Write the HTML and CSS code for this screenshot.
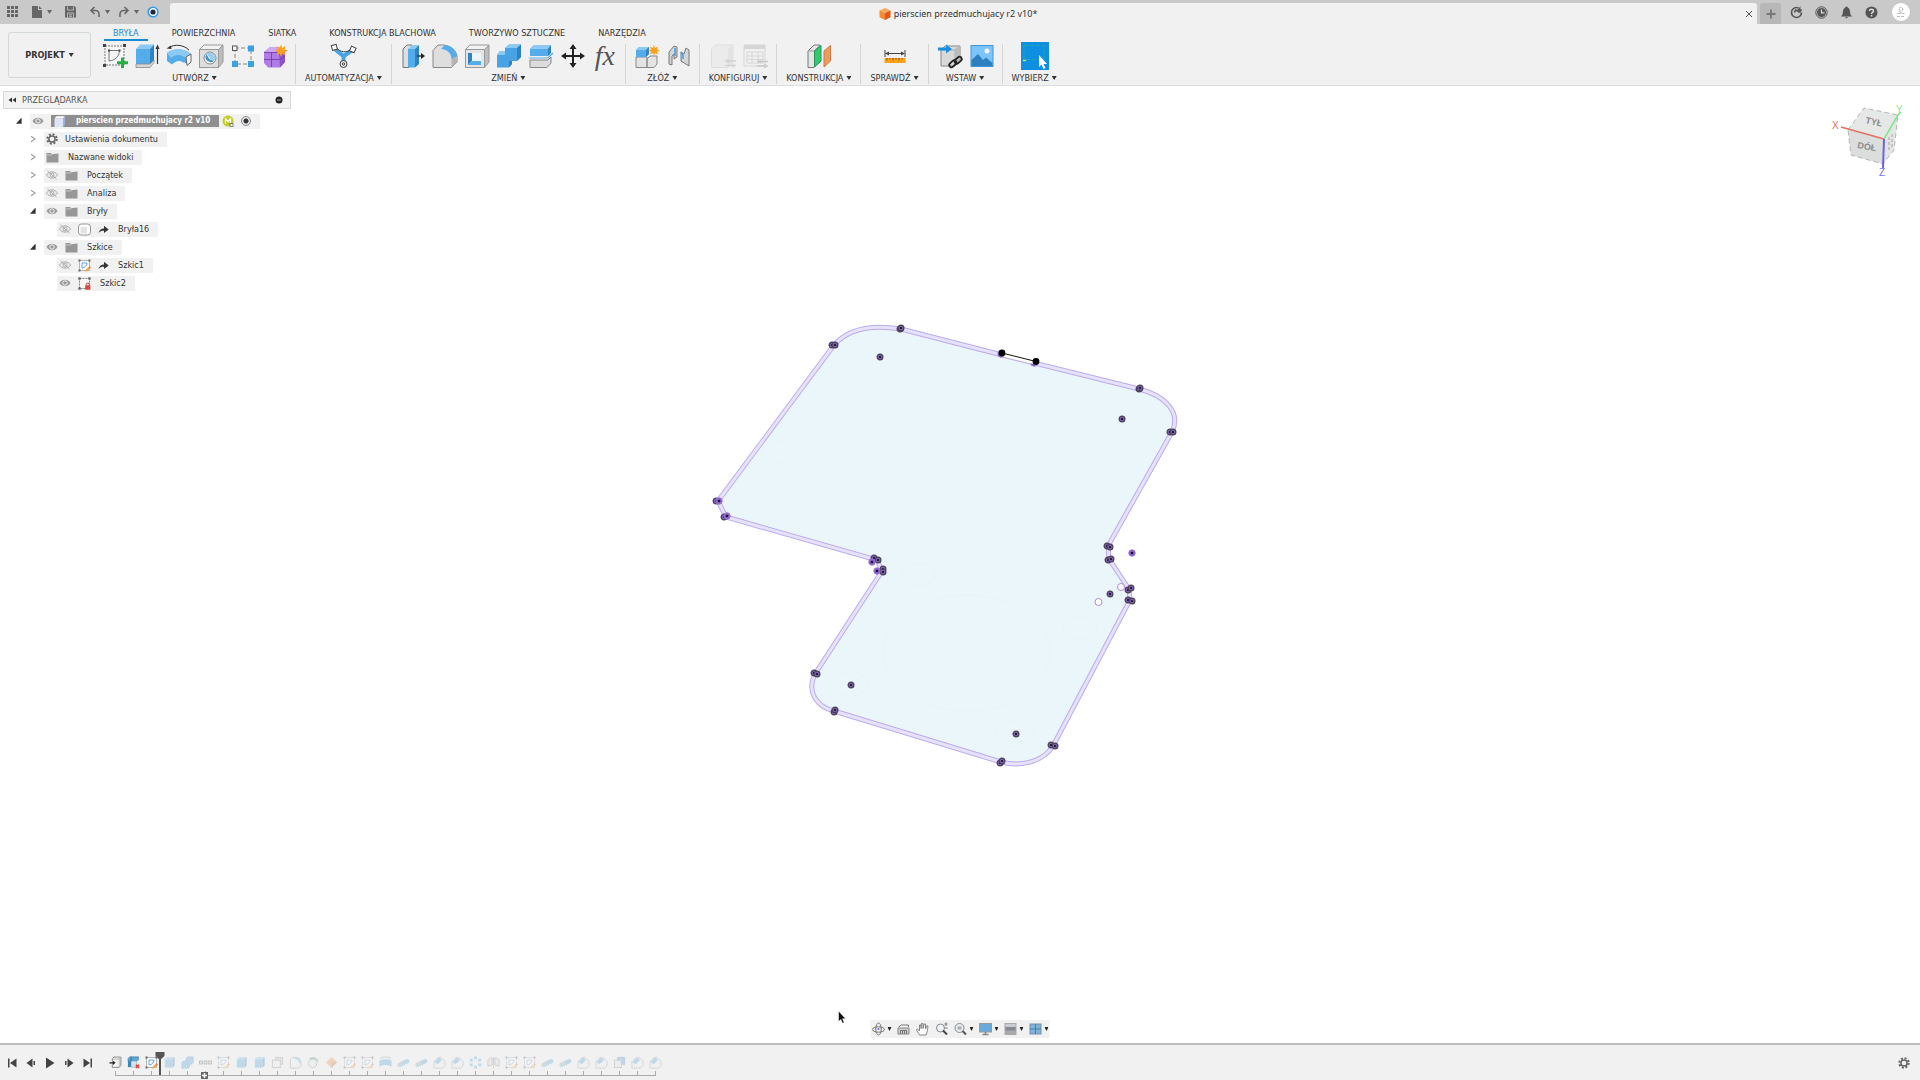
FILE: index.html
```html
<!DOCTYPE html>
<html lang="pl">
  <head>
    <meta charset="UTF-8" />
    <meta name="viewport" content="width=device-width, initial-scale=1.0" />
    <title>pierscien przedmuchujacy r2 v10*</title>
    <link rel="stylesheet" href="styles.css">
  </head>
  <body>
    <!-- Shared icon shapes -->
    <svg class="sprite" aria-hidden="true">
      <symbol id="eye" viewBox="0 0 12 10">
        <path d="M0.5 5C3 0.6 9 0.6 11.5 5C9 9.4 3 9.4 0.5 5Z" fill="#999" />
        <circle cx="6" cy="5" r="2.2" fill="none" stroke="#f4f4f4" />
      </symbol>
      <symbol id="eye-off" viewBox="0 0 12 10">
        <path d="M0.5 5C3 0.8 9 0.8 11.5 5C9 9.2 3 9.2 0.5 5Z" fill="none" stroke="#aaa" />
        <circle cx="6" cy="5" r="2" fill="none" stroke="#aaa" />
        <path d="M1.5 1L10.5 9" stroke="#aaa" />
      </symbol>
      <symbol id="folder" viewBox="0 0 13 11">
        <path d="M0.5 1H5L6 2.2L12.5 1.6V10.5H0.5Z" fill="#979797" />
        <path d="M1 3H5.4L6.6 2" fill="none" stroke="#d5d5d5" stroke-width="0.8" />
      </symbol>
      <symbol id="gear" viewBox="0 0 12 12">
        <circle cx="6" cy="6" r="4.7" fill="none" stroke="#666" stroke-width="2" stroke-dasharray="2 1.69" />
        <circle cx="6" cy="6" r="3.1" fill="none" stroke="#666" stroke-width="1.5" />
      </symbol>
      <symbol id="link-arrow" viewBox="0 0 11 9">
        <path d="M0.5 8C1.5 4.5 3.5 3.4 6 3.4V0.8L10.7 4.6L6 8V5.8C3.7 5.7 2 6.3 0.5 8Z" fill="#333" />
      </symbol>
      <symbol id="sketch" viewBox="0 0 13 13">
        <path d="M1.5 1.5H11.5V11.5H1.5Z" fill="#f8f9fa" stroke="#999" stroke-width="0.7" />
        <path d="M4 4H9C9 6.500 7 8.700 4 9Z" fill="none" stroke="#5b9fdc" stroke-width="0.9" />
        <g fill="#666"><rect x="0.500" y="0.500" width="2" height="2" /><rect x="10.500" y="0.500" width="2" height="2" /><rect x="0.500" y="10.500" width="2" height="2" /></g>
        <path d="M7 12.600L7.500 10.900L10.600 8L12 9.400L8.900 12.200Z" fill="#f3a53b" />
        <path d="M10.600 8L11.600 7.100L13 8.500L12 9.400Z" fill="#e46f43" />
      </symbol>
      <symbol id="sketch-locked" viewBox="0 0 13 13">
        <path d="M1.500 1.500H11.500V11.500H1.500Z" fill="#f8f8f8" stroke="#666" stroke-width="0.8" stroke-dasharray="2 1" />
        <g fill="#666"><rect x="0.300" y="0.300" width="2.400" height="2.400" /><rect x="10.300" y="0.300" width="2.400" height="2.400" /><rect x="0.300" y="10.300" width="2.400" height="2.400" /></g>
        <path d="M8.200 8.500V7.600A1.600 1.600 0 0 1 11.400 7.600V8.500" fill="none" stroke="#c73c3c" />
        <rect x="7.200" y="8.200" width="5.200" height="4.600" rx="0.600" fill="#d94444" />
      </symbol>
      <symbol id="body" viewBox="0 0 13 13">
        <rect x="0.500" y="1" width="12" height="11" rx="3" fill="#fff" stroke="#999" />
        <rect x="2.500" y="4" width="6.500" height="6.500" fill="#e3e3e3" />
      </symbol>
      <symbol id="component" viewBox="0 0 13 13">
        <path d="M1.500 3.500L3.500 1.300H12L10 3.500Z" fill="#fff" />
        <path d="M1.500 3.500H10V12H1.500Z" fill="#dfe4f6" />
        <path d="M10 3.500L12 1.300V9.800L10 12Z" fill="#9fb1dc" />
      </symbol>

      <!-- Timeline features -->
      <symbol id="f-import" viewBox="0 0 14 14">
        <path d="M3.5 5.5V3L5.5 1.2H12.8V10L11 12.3H3.5V9.3" fill="#f3f3f3" stroke="#777" stroke-width="0.9" />
        <path d="M11 12V3.3H3.8M11 3.3L12.6 1.4" fill="none" stroke="#aaa" stroke-width="0.8" />
        <path d="M0.500 7.400H4.500" stroke="#222" stroke-width="1.400" />
        <path d="M4 4.800L7 7.400L4 10Z" fill="#222" />
      </symbol>
      <symbol id="f-remove" viewBox="0 0 14 14">
        <path d="M1 3L3 0.800H12.500V4L10.500 5.500H1Z" fill="#5aa7dc" stroke="#5d7f9c" stroke-width="0.600" />
        <path d="M1 5.200H4.500V12H1Z" fill="#3c86bd" />
        <path d="M4.500 5.500H10.500V12H4.500Z" fill="#d3e5f3" stroke="#8aa" stroke-width="0.600" />
        <path d="M4.500 1V5.200" stroke="#2f5f85" stroke-width="0.800" />
        <path d="M9.500 9.500L13 13M13 9.500L9.500 13" stroke="#e33b2e" stroke-width="1.500" />
      </symbol>
      <symbol id="f-extrude" viewBox="0 0 14 14">
        <path d="M2 3.5L4 1.2H12.5L10.5 3.5Z" fill="#7fc3f2" />
        <path d="M2 3.5H10.5V12.5H2Z" fill="#4d9fdd" />
        <path d="M10.5 3.5L12.5 1.2V10.3L10.5 12.5Z" fill="#2d76b3" />
      </symbol>
      <symbol id="f-combine" viewBox="0 0 14 14">
        <path d="M1 7L2.5 5.5H5.5V3L7 1H13V7L11.5 8.7H9.3V11.3L8 13H1Z" fill="#4d9fdd" stroke="#2d76b3" stroke-width="0.8" />
      </symbol>
      <symbol id="f-group" viewBox="0 0 14 14">
        <g fill="none" stroke="#555" stroke-width="1.1"><rect x="0.5" y="5.5" width="3" height="3" /><rect x="5.5" y="5.5" width="3" height="3" /><rect x="10.5" y="5.5" width="3" height="3" /></g>
      </symbol>
      <symbol id="f-shell" viewBox="0 0 14 14">
        <path d="M5 1.5H12.5V9H10V4.5H5Z" fill="#ccc" stroke="#888" />
        <rect x="1.5" y="4.5" width="8.5" height="8" fill="#eee" stroke="#888" />
      </symbol>
      <symbol id="f-fillet" viewBox="0 0 14 14">
        <path d="M1.5 4L4 1.5H8C11.5 2 13 4.5 13 7V10.5L10.5 13H1.5Z" fill="#eee" stroke="#888" />
        <path d="M5 3.5H7.5C10 4 11 6 11 8.5L13 6.5C12.5 3.5 10.5 1.5 8 1.5Z" fill="#5fb0ea" />
      </symbol>
      <symbol id="f-chamfer" viewBox="0 0 14 14">
        <path d="M1 6L6 1.5H9L13 5.5V10.5L10.5 13H1Z" fill="#eee" stroke="#999" />
        <path d="M1.5 6.5L6.500 1.500L10 4L5 9Z" fill="#4d9fdd" />
      </symbol>
      <symbol id="f-hole" viewBox="0 0 14 14">
        <circle cx="6" cy="8" r="4.5" fill="#e4eef0" stroke="#888" />
        <path d="M3 3.5C6 1 11 2.5 12 6" fill="none" stroke="#3c8f80" stroke-width="1.6" />
      </symbol>
      <symbol id="f-plane" viewBox="0 0 14 14">
        <path d="M1 7L7 1L13 6.500L7 13Z" fill="#e8924a" />
        <path d="M7 7L13 6.500L7 13Z" fill="#a77a55" />
      </symbol>
      <symbol id="f-sweep" viewBox="0 0 14 14">
        <path d="M0.5 5C4 3 10 3 13.5 5V11.500C10 9 4 9 0.5 11.500Z" fill="#4d9fdd" />
        <path d="M1 2.5C4 0.5 10 0.5 13 2.5" fill="none" stroke="#888" />
      </symbol>
      <symbol id="f-pipe" viewBox="0 0 14 14">
        <path d="M3 9.5L11 5.5" stroke="#4d9fdd" stroke-width="4.5" stroke-linecap="round" />
        <path d="M2.5 9.5L5 8.5" stroke="#9aa6ae" stroke-width="4" stroke-linecap="round" />
      </symbol>
      <symbol id="f-pattern" viewBox="0 0 14 14">
        <g fill="#4d9fdd"><rect x="5.5" y="0.5" width="3" height="3" /><rect x="10" y="3" width="3" height="3" /><rect x="10" y="8" width="3" height="3" /><rect x="5.5" y="10.5" width="3" height="3" /><rect x="1" y="8" width="3" height="3" /><rect x="1" y="3" width="3" height="3" /></g>
      </symbol>
      <symbol id="f-mirror" viewBox="0 0 14 14">
        <path d="M1 11V4.5L4 2H5.5V9.5Z" fill="#ddd" stroke="#777" stroke-width="0.9" />
        <path d="M13 11V4.5L10 2H8.5V9.5Z" fill="#ddd" stroke="#777" stroke-width="0.9" />
        <path d="M7 1V13" stroke="#e0762c" />
      </symbol>
      <symbol id="f-split" viewBox="0 0 14 14">
        <path d="M5 1.5H12.5V9H5Z" fill="#4d9fdd" stroke="#4481ad" />
        <rect x="1.5" y="4.5" width="7.5" height="8" fill="#e2e6ea" stroke="#888" />
      </symbol>

      <!-- Sketch points -->
      <symbol id="pt" viewBox="0 0 8 8">
        <circle cx="4" cy="4" r="2.9" fill="#7a5fb0" stroke="#4a4058" stroke-width="1.2" />
        <circle cx="4" cy="4" r="1.1" fill="#140f1c" />
      </symbol>
      <symbol id="pt-violet" viewBox="0 0 8 8">
        <circle cx="4" cy="4" r="3.2" fill="#8a5fcb" stroke="#9a72d8" />
        <circle cx="4" cy="4" r="1.3" fill="#1d1230" />
      </symbol>
    </svg>

    <header>
      <div class="titlebar">
        <div class="quick">
          <button aria-label="Panel danych">
            <svg width="14" height="14" fill="#666"><path d="M2 1h3v3h-3zM6 1h3v3h-3zM10 1h3v3h-3zM2 5h3v3h-3zM6 5h3v3h-3zM10 5h3v3h-3zM2 9h3v3h-3zM6 9h3v3h-3zM10 9h3v3h-3z" /></svg>
          </button>
          <button aria-label="Plik">
            <svg width="14" height="14"><path d="M2 1H8V5H12V13H2Z" fill="#666" /><path d="M9 1L12 4H9Z" fill="#666" /></svg>
            <i class="caret"></i>
          </button>
          <button aria-label="Zapisz">
            <svg width="14" height="14"><path d="M2 1H11.5L13 2.5V12.5H2Z" fill="#666" /><path d="M4.5 1.5V5H10.5V1.5M4.5 12.5V8H10.5V12.5M6 9.8H9M6 11.3H9" fill="none" stroke="#c9c9c9" stroke-width="0.8" /></svg>
          </button>
          <div class="history">
            <button aria-label="Cofnij">
              <svg width="14" height="14"><path d="M6.5 2L3 5.5L6.5 9M3.5 5.5H7.5C10.500 5.500 11.500 8 11 12" fill="none" stroke="#666" stroke-width="1.6" /></svg>
              <i class="caret"></i>
            </button>
            <button aria-label="Ponów">
              <svg width="14" height="14"><path d="M7.5 2L11 5.5L7.5 9M10.500 5.500H6.500C3.500 5.500 2.500 8 3 12" fill="none" stroke="#666" stroke-width="1.6" /></svg>
              <i class="caret"></i>
            </button>
            <button aria-label="Status">
              <svg width="14" height="14"><circle cx="7" cy="7" r="4.8" fill="#fff" stroke="#2f9bea" stroke-width="1.6" /><circle cx="7" cy="7" r="2.6" fill="#1c2a3a" /></svg>
            </button>
          </div>
        </div>
        <div class="doc-tab">
          <svg width="12" height="12"><path d="M6 0L11.5 2.5L6 5L0.5 2.5Z" fill="#f9a95c" /><path d="M0.5 2.5L6 5V12L0.5 9.3Z" fill="#f58a35" /><path d="M6 5L11.5 2.5V9.3L6 12Z" fill="#e05a17" /></svg>
          <span>pierscien przedmuchujacy r2 v10*</span>
          <button class="close" aria-label="Zamknij"><svg width="8" height="8"><path d="M1 1L7 7M7 1L1 7" stroke="#555" /></svg></button>
        </div>
        <button class="new-tab" aria-label="Nowy projekt"><svg width="10" height="10"><path d="M5 0.5V9.5M0.5 5H9.5" stroke="#777" stroke-width="1.8" /></svg></button>
        <div class="account">
          <button aria-label="Rozszerzenia"><svg width="13" height="13"><circle cx="6.5" cy="6.5" r="5" fill="none" stroke="#555" stroke-width="1.6" stroke-dasharray="25 2 2 2.4" /><path d="M4.500 6.500L5.500 4L7.500 5L9.500 2.500L9 6L11 5.500" fill="none" stroke="#555" stroke-width="1.500" /></svg></button>
          <button aria-label="Status zadań"><svg width="13" height="13"><circle cx="6.5" cy="6.5" r="5.7" fill="none" stroke="#555" /><circle cx="6.5" cy="6.5" r="4.5" fill="#555" /><path d="M6.5 3.5V6.8H9.5" fill="none" stroke="#ddd" stroke-width="1.2" /></svg></button>
          <button aria-label="Powiadomienia"><svg width="13" height="13"><path d="M6.5 0.5C8 0.5 7.3 1.5 8 1.8C10.3 3 10 6.5 10.5 8.5L12 10.5H1L2.5 8.5C3 6.5 2.7 3 5 1.8C5.7 1.5 5 0.5 6.5 0.5ZM5 11H8L6.5 12.5Z" fill="#555" /></svg></button>
          <button aria-label="Pomoc"><svg width="13" height="13"><circle cx="6.5" cy="6.5" r="6" fill="#555" /><path d="M4.5 5C4.5 2.6 8.5 2.6 8.5 5C8.5 6.4 6.5 6.3 6.5 8" fill="none" stroke="#ddd" stroke-width="1.4" /><rect x="5.800" y="9" width="1.500" height="1.500" fill="#ddd" /></svg></button>
          <button class="avatar" aria-label="Konto"><svg width="18" height="18"><circle cx="9" cy="6" r="1.800" fill="none" stroke="#aaa" stroke-dasharray="2 1" /><path d="M5 13.500H13M5.500 10.500H12.500M7 8.500L9 9.500L11 8.500" fill="none" stroke="#bbb" stroke-dasharray="3 1" /></svg></button>
        </div>
      </div>

      <div class="ribbon">
        <button class="workspace">PROJEKT <i class="caret"></i></button>
        <div class="ribbon-main">
          <nav class="tabs">
            <a href="#" class="active">BRYŁA</a>
            <a href="#">POWIERZCHNIA</a>
            <a href="#">SIATKA</a>
            <a href="#">KONSTRUKCJA BLACHOWA</a>
            <a href="#">TWORZYWO SZTUCZNE</a>
            <a href="#">NARZĘDZIA</a>
          </nav>
          <div class="groups">
            <div class="group">
              <div class="tools">
                <button aria-label="Utwórz szkic"><svg width="24" height="24"><path d="M2 2H21V21H2Z" fill="#f6f6f6" stroke="#777" stroke-dasharray="2 1" /><path d="M6 17V6.5H16.5C16.5 12 12 16.5 6 17Z" fill="none" stroke="#777" /><g fill="#444"><rect width="3" height="3" /><rect x="20" width="3" height="3" /><rect y="20" width="3" height="3" /><rect x="5" y="5.5" width="2" height="2" /><rect x="15.5" y="5.5" width="2" height="2" /></g><path d="M19.5 13.5V24M14 18.8H25" stroke="#22b045" stroke-width="3" /></svg></button>
                <button aria-label="Wyciągnięcie"><svg width="24" height="24"><path d="M1 5L5 0.5H19L15 5Z" fill="#8ccaf5" /><path d="M1 5H15V20H1Z" fill="#55aceb" /><path d="M15 5L19 0.5V16L15 20Z" fill="#2d83c4" /><path d="M1 20H15L19 16V18.5L15 23.5H1Z" fill="#d7d7d7" stroke="#888" stroke-width="0.8" /><path d="M22.5 20V3" stroke="#333" stroke-width="1.2" /><path d="M22.5 0.5L24.5 5H20.5Z" fill="#333" /></svg></button>
                <button aria-label="Obrót"><svg width="26" height="24"><path d="M1 9C7 4 18 4 25 10L22 21C20 19 19 18.5 17 18.5C13 16 10 17 6 20.5L1 17Z" fill="#55aceb" /><path d="M1 9C7 4 18 4 25 10L20 14C15 10 9 10 5 14Z" fill="#8ccaf5" /><path d="M20 13L25 10V18L21 21.5Z" fill="#f5f5f5" stroke="#666" /><path d="M3 3.5C9 0 17 0.5 23 6" fill="none" stroke="#333" /><path d="M0.5 4.5L5 1.5L5.5 5Z" fill="#333" /></svg></button>
                <button aria-label="Otwór"><svg width="24" height="24"><path d="M0.5 5.5L5 1H24L19.5 5.5Z" fill="#f2f2f2" stroke="#999" /><path d="M19.5 5.5L24 1V18L19.5 23.5Z" fill="#bdbdbd" stroke="#999" /><rect x="0.5" y="5.5" width="19" height="18" fill="#dedede" stroke="#999" /><circle cx="11" cy="14" r="6" fill="#f8f8f8" stroke="#888" /><path d="M7 10.500C9 11 9 17 15.500 16.500A5.300 5.300 0 0 1 7 10.500Z" fill="#3c93d2" /><path d="M7 10.500C9 7.500 15 8 16.300 13L15.500 16.500C11 17 10 11 7 10.500Z" fill="#9bcdf0" /></svg></button>
                <button aria-label="Szyk prostokątny"><svg width="24" height="24"><path d="M4 4H20M4 4V20H20V4" fill="none" stroke="#888" stroke-dasharray="4 2" /><rect x="1.5" y="2" width="4.5" height="4.5" fill="#f5f5f5" stroke="#555" /><g fill="#3d9fe6"><rect x="17" y="1.5" width="6" height="6" /><rect x="1" y="17" width="6" height="6" /><rect x="17" y="17" width="6" height="6" /></g></svg></button>
                <button aria-label="Utwórz formę"><svg width="24" height="24"><path d="M1 8L7 3H18L22 8V18L17 23.5H5L1 19Z" fill="#b07be6" /><path d="M1 8L7 3H18L15 8Z" fill="#cda6f5" /><path d="M16 8L22 6V18L17 23.5Z" fill="#8a53c8" /><path d="M1 8.5H16L22 6M8.5 8V23M1 15.5H16.5L22 12" fill="none" stroke="#7743b5" /><path d="M18 0.5L19.3 4L22.5 2L21.5 5.5L25 6.5L21.5 8L22.5 11.5L19.3 9.5L18 13L16.7 9.5L13.5 11.5L14.5 8L11.5 6.5L14.5 5.5L13.5 2L16.7 4Z" fill="#fba01c" /></svg></button>
              </div>
              <button class="group-label">UTWÓRZ<i class="caret"></i></button>
            </div>
            <div class="group">
              <div class="tools">
                <button aria-label="Automatyzacja"><svg width="24" height="24"><path d="M3 5C6 8 9 10 11.500 12C15 10 17 9 20 6M11.500 12V19" fill="none" stroke="#46a3e5" stroke-width="4" /><path d="M4 3C8 9 15 9 20 5" fill="none" stroke="#444" /><rect x="0" y="1" width="5" height="5" fill="#fff" stroke="#444" transform="rotate(-15 2 4)" /><rect x="18.5" y="3" width="5" height="5" fill="#fff" stroke="#444" transform="rotate(25 21 5)" /><circle cx="11.5" cy="20" r="3.5" fill="#e8e8e8" stroke="#444" /><circle cx="11.5" cy="20" r="1.2" fill="none" stroke="#444" /></svg></button>
              </div>
              <button class="group-label">AUTOMATYZACJA<i class="caret"></i></button>
            </div>
            <div class="group">
              <div class="tools">
                <button aria-label="Naciśnij i pociągnij"><svg width="24" height="24"><path d="M2 5L6 1H11V20L8 23.5H2Z" fill="#dedede" stroke="#777" /><path d="M7 5L11 1H18L14 5Z" fill="#8ccaf5" /><path d="M7 5H14V23.5H7Z" fill="#55aceb" /><path d="M14 5L18 1V20L14 23.5Z" fill="#2d83c4" /><path d="M16 12H22" stroke="#222" stroke-width="1.2" /><path d="M20 9L24 12L20 15Z" fill="#222" /></svg></button>
                <button aria-label="Zaokrąglenie"><svg width="26" height="24"><path d="M1 6.5L6 1H12C20 2 25 8 25 13V18L19.5 23.5H1Z" fill="#dedede" stroke="#888" /><path d="M19.5 15L25 11V18L19.5 23.5Z" fill="#b5b5b5" /><path d="M9 5L13 1C20 2 24 6 25 12L19.5 15C19.5 9 15 5.5 9 5Z" fill="#55aceb" /></svg></button>
                <button aria-label="Skorupa"><svg width="24" height="24"><path d="M0.5 5.5L5 1H24L19.5 5.5Z" fill="#f2f2f2" stroke="#999" /><path d="M19.5 5.5L24 1V18L19.5 23.5Z" fill="#bdbdbd" stroke="#999" /><rect x="0.5" y="5.5" width="19" height="18" fill="#e4e4e4" stroke="#999" /><rect x="3" y="9" width="13" height="12" fill="#eaf5fd" /><path d="M3 9H7V17L3 21Z" fill="#2d83c4" /><path d="M3 21L7 17H16V21Z" fill="#55aceb" /></svg></button>
                <button aria-label="Połącz"><svg width="24" height="24"><path d="M0 11L3 7H8V4L12 0.5H24V13L20 17H15V20L12 23.5H0Z" fill="#48a2e4" /><path d="M8 4L12 0.5H24L20 4ZM0 11L3 7H8V11Z" fill="#8ccaf5" /><path d="M20 4L24 0.5V13L20 17ZM12 17H15V20L12 23.5Z" fill="#2d83c4" /></svg></button>
                <button aria-label="Podziel bryłę"><svg width="24" height="24"><path d="M1 5L5 1H22V9L19 12H1Z" fill="#55aceb" /><path d="M1 5L5 1H22L19 5Z" fill="#8ccaf5" /><path d="M19 5L22 1V9L19 12Z" fill="#2d83c4" /><path d="M1 16H19L22 13V19L18 23.5H1Z" fill="#dcdcdc" stroke="#888" /><path d="M0 14H19L24 9" fill="none" stroke="#55aceb" stroke-width="1.2" /></svg></button>
                <button aria-label="Przesuń"><svg width="24" height="24"><path d="M12 3V21M3 12H21" stroke="#222" stroke-width="2" /><path d="M12 0L15.5 5H8.5ZM12 24L15.5 19H8.5ZM0 12L5 8.5V15.5ZM24 12L19 8.5V15.5Z" fill="#222" /></svg></button>
                <button class="fx" aria-label="Zmień parametry">fx</button>
              </div>
              <button class="group-label">ZMIEŃ<i class="caret"></i></button>
            </div>
            <div class="group">
              <div class="tools">
                <button aria-label="Nowy komponent"><svg width="24" height="24"><path d="M1 13H12V23.5H1ZM12 15L15 12H22V20L19 23.5H12Z" fill="#e4e4e4" stroke="#888" /><path d="M1 6L4 3H14V10L11 13H1Z" fill="#55aceb" /><path d="M1 6L4 3H14L11 6Z" fill="#8ccaf5" /><path d="M11 6L14 3V10L11 13Z" fill="#2d83c4" /><path d="M19 1L20 4L23 2.5L22 5.5L25 6.5L22 7.5L23 10.5L20 9L19 12L18 9L15 10.5L16 7.5L13 6.5L16 5.5L15 2.5L18 4Z" fill="#fba01c" /></svg></button>
                <button aria-label="Połączenie"><svg width="24" height="24"><path d="M2 8L7 2L10 3V13L7 15V10L5 12V21L2 20Z" fill="#d5d5d5" stroke="#777" /><path d="M14 8L17 10L19 4L22 6V22L14 17Z" fill="#d5d5d5" stroke="#777" /><path d="M8 12V4M14 8L16 11V15" stroke="#3d9fe6" stroke-width="1.5" fill="none" /></svg></button>
              </div>
              <button class="group-label">ZŁÓŻ<i class="caret"></i></button>
            </div>
            <div class="group">
              <div class="tools disabled">
                <button disabled aria-label="Konfiguracja"><svg width="24" height="24"><path d="M0.5 5L5 1H22V18L17 23.5H0.5Z" fill="#ddd" stroke="#aaa" /><path d="M17 5L22 1V18L17 23.5Z" fill="#bbb" /><path d="M14 17H25M14 21.5H25M17 15V19M22 19.5V23.5" stroke="#777" stroke-width="1.5" /></svg></button>
                <button disabled aria-label="Tabela"><svg width="24" height="24"><path d="M1 1H22V22H1Z" fill="#eee" stroke="#888" /><path d="M1 1H22V5H1Z" fill="#888" /><path d="M4 8H20V19H4ZM4 12H20M4 15.5H20M9 8V19M15 8V19" fill="none" stroke="#888" /><path d="M14 17.5H25M14 22H25M17 16V19M22 20V24" stroke="#555" stroke-width="1.5" /></svg></button>
              </div>
              <button class="group-label">KONFIGURUJ<i class="caret"></i></button>
            </div>
            <div class="group">
              <div class="tools">
                <button aria-label="Płaszczyzna"><svg width="24" height="24"><path d="M1 7L7 1H13V17L7 23.5H1Z" fill="#e6e6e6" stroke="#777" /><path d="M1 7H7L13 1" fill="none" stroke="#999" /><path d="M7.5 7L14 1.5V17L7.5 23Z" fill="#35c873" stroke="#239955" /><path d="M17 7L23.5 1.5V17L17 23Z" fill="#ee9a5e" stroke="#cc7b45" /></svg></button>
              </div>
              <button class="group-label">KONSTRUKCJA<i class="caret"></i></button>
            </div>
            <div class="group">
              <div class="tools">
                <button aria-label="Zmierz"><svg width="24" height="24"><path d="M2 6V13M22 6V13M3 9.5H21" stroke="#444" /><path d="M2 9.5L6 7.5V11.5ZM22 9.5L18 7.5V11.5Z" fill="#444" /><rect x="1.5" y="14" width="21" height="5" fill="#f9a11b" /><path d="M4 14V16.5M7 14V15.5M10 14V16.5M13 14V15.5M16 14V16.5M19 14V15.5" stroke="#8a5a10" /></svg></button>
              </div>
              <button class="group-label">SPRAWDŹ<i class="caret"></i></button>
            </div>
            <div class="group">
              <div class="tools">
                <button aria-label="Wstaw odnośnik"><svg width="24" height="24"><path d="M3 6L7 2H22V17L17 22H3Z" fill="#d9d9d9" stroke="#888" /><path d="M3 6H17L22 2M17 6V22" fill="none" stroke="#aaa" /><path d="M17 6L22 2V17L17 22Z" fill="#bbb" /><path d="M0 3.5H8V0.5L14 5L8 9.5V6.5H0Z" fill="#1b8fe0" /><rect x="11" y="17.5" width="8" height="4.5" rx="2.2" fill="none" stroke="#222" stroke-width="1.8" transform="rotate(-42 15 20)" /><rect x="16" y="14" width="8" height="4.5" rx="2.2" fill="none" stroke="#222" stroke-width="1.8" transform="rotate(-42 20 16)" /></svg></button>
                <button aria-label="Wstaw obraz"><svg width="24" height="24"><rect x="1" y="1.5" width="22" height="21" fill="#7cc4fb" stroke="#3f97d9" /><path d="M1.5 16L8 10L13 16L16 13.5L22.5 19V22H1.5Z" fill="#2c80bf" /><circle cx="17" cy="7" r="2.5" fill="#f4f6ff" /></svg></button>
              </div>
              <button class="group-label">WSTAW<i class="caret"></i></button>
            </div>
            <div class="group">
              <div class="tools">
                <button class="selected" aria-label="Wybierz"><svg width="24" height="24"><path d="M1 1.5H21V15.5H1Z" fill="none" stroke="#1fa9b4" stroke-dasharray="4 2" /><path d="M0 16.500H3" stroke="#d9e84a" stroke-width="1.500" /><path d="M16 11V23L18.5 20.5L20.5 25L22.5 24L20.5 20H24Z" fill="#fff" /></svg></button>
              </div>
              <button class="group-label">WYBIERZ<i class="caret"></i></button>
            </div>
          </div>
        </div>
      </div>
    </header>

    <main>
      <!-- Model space -->
      <svg class="model" viewBox="0 86 1920 957">
        <path class="profile" d="M834 345C847 330 870 324 901 329L1002 355L1139 389C1163 395 1182 411 1172 432L1108 546L1109 559L1129 589L1130 600L1053 746C1043 762 1021 767 1001 762L834 711C817 707 806 692 815 674L882 571L877 560L726 517L718 501Z" />
        <g class="hidden-holes">
          <ellipse cx="967" cy="653" rx="83" ry="58" /><ellipse cx="919" cy="575" rx="17" ry="11" /><ellipse cx="1080" cy="628" rx="17" ry="11" />
          <ellipse cx="851" cy="684" rx="17" ry="12" /><ellipse cx="1015" cy="734" rx="19" ry="13" /><ellipse cx="780" cy="452" rx="18" ry="11" />
        </g>
        <path class="edge" d="M834 345C847 330 870 324 901 329L1002 355L1139 389C1163 395 1182 411 1172 432L1108 546L1109 559L1129 589L1130 600L1053 746C1043 762 1021 767 1001 762L834 711C817 707 806 692 815 674L882 571L877 560L726 517L718 501Z" />
        <path class="edge-core" d="M834 345C847 330 870 324 901 329L1002 355L1139 389C1163 395 1182 411 1172 432L1108 546L1109 559L1129 589L1130 600L1053 746C1043 762 1021 767 1001 762L834 711C817 707 806 692 815 674L882 571L877 560L726 517L718 501Z" />
        <g id="points"></g>
        <circle cx="1121" cy="587" r="3.5" class="hollow" />
        <circle cx="1098.5" cy="602" r="3.5" class="hollow" />
        <path class="gap-edge" d="M1002 353L1036 361.5" />
        <path class="new-edge" d="M1002 353L1036 361.5" />
        <circle cx="1002" cy="353" r="3.4" /><circle cx="1036" cy="361.5" r="3.4" />
        <path d="M838.500 1011V1021.500L840.800 1019.500L842.500 1023.300L844.200 1022.500L842.500 1018.800H845.700Z" fill="#111" stroke="#fff" stroke-width="0.5" />
      </svg>

      <aside class="browser">
        <div class="browser-head">
          <button aria-label="Zwiń"><svg width="8" height="6"><path d="M4 0.5V5.5L0.5 3ZM8 0.5V5.5L4.5 3Z" fill="#333" /></svg></button>
          <span>PRZEGLĄDARKA</span>
          <button aria-label="Opcje"><svg width="8" height="8"><circle cx="4" cy="4" r="3.5" fill="#222" /><path d="M2 4H6" stroke="#aaa" /></svg></button>
        </div>
        <ul class="tree">
          <li>
            <div class="row"><button class="toggle open" aria-label="Zwiń"></button>
              <div class="chip"><svg width="12" height="10"><use href="#eye" /></svg>
                <span class="root"><svg width="13" height="13"><use href="#component" /></svg>pierscien przedmuchujacy r2 v10</span>
                <svg width="12" height="12"><circle cx="6" cy="6" r="5.5" fill="#c3cc22" /><path d="M3.5 8.5V3.8L6 6.5L8.5 3.8V8" fill="none" stroke="#fff" stroke-width="1.2" /><rect x="8" y="8.500" width="3" height="3" fill="#fff" stroke="#666" stroke-width="0.800" /></svg>
                <input type="radio" checked aria-label="Aktywuj komponent" />
              </div>
            </div>
            <ul>
              <li><div class="row"><button class="toggle" aria-label="Rozwiń"></button><div class="chip narrow"><svg width="12" height="12"><use href="#gear" /></svg><span>Ustawienia dokumentu</span></div></div></li>
              <li><div class="row"><button class="toggle" aria-label="Rozwiń"></button><div class="chip"><svg width="13" height="11"><use href="#folder" /></svg><span>Nazwane widoki</span></div></div></li>
              <li><div class="row"><button class="toggle" aria-label="Rozwiń"></button><div class="chip"><svg width="12" height="10"><use href="#eye-off" /></svg><svg width="13" height="11"><use href="#folder" /></svg><span>Początek</span></div></div></li>
              <li><div class="row"><button class="toggle" aria-label="Rozwiń"></button><div class="chip"><svg width="12" height="10"><use href="#eye-off" /></svg><svg width="13" height="11"><use href="#folder" /></svg><span>Analiza</span></div></div></li>
              <li><div class="row"><button class="toggle open" aria-label="Zwiń"></button><div class="chip"><svg width="12" height="10"><use href="#eye" /></svg><svg width="13" height="11"><use href="#folder" /></svg><span>Bryły</span></div></div>
                <ul>
                  <li><div class="row"><div class="chip"><svg width="12" height="10"><use href="#eye-off" /></svg><svg width="13" height="13"><use href="#body" /></svg><svg width="11" height="9"><use href="#link-arrow" /></svg><span>Bryła16</span></div></div></li>
                </ul>
              </li>
              <li><div class="row"><button class="toggle open" aria-label="Zwiń"></button><div class="chip"><svg width="12" height="10"><use href="#eye" /></svg><svg width="13" height="11"><use href="#folder" /></svg><span>Szkice</span></div></div>
                <ul>
                  <li><div class="row"><div class="chip"><svg width="12" height="10"><use href="#eye-off" /></svg><svg width="13" height="13"><use href="#sketch" /></svg><svg width="11" height="9"><use href="#link-arrow" /></svg><span>Szkic1</span></div></div></li>
                  <li><div class="row"><div class="chip"><svg width="12" height="10"><use href="#eye" /></svg><svg width="13" height="13"><use href="#sketch-locked" /></svg><span>Szkic2</span></div></div></li>
                </ul>
              </li>
            </ul>
          </li>
        </ul>
      </aside>

      <!-- View cube -->
      <svg class="cube" width="76" height="76" viewBox="0 0 76 76">
        <path d="M32 4L66 11L52 35L16 26Z" fill="#e6e8e8" />
        <path d="M16 26L52 35L51 60L19 51Z" fill="#dcdede" />
        <path d="M52 35L66 11L62 46L51 60Z" fill="#e4e6e6" />
        <path d="M16 26L32 4L66 11L62 46L51 60L19 51Z" fill="none" stroke="#b5b7b7" stroke-dasharray="5 3" />
        <path d="M57 33V48M60 30V44" stroke="#bbb" stroke-width="1.500" stroke-dasharray="3 2" />
        <path d="M9 23L52 35" stroke="#e2705f" stroke-width="1.5" />
        <path d="M52 35L66 11L69 8" fill="none" stroke="#7fe58a" stroke-width="1.5" />
        <path d="M52 35L51 64" stroke="#6b63e6" stroke-width="2" />
        <text x="33" y="19" class="face" transform="rotate(12 33 19)">TYŁ</text>
        <text x="25" y="44" class="face" transform="rotate(10 25 44)">DÓŁ</text>
        <text x="0" y="25" fill="#e2705f">X</text>
        <text x="64" y="9" fill="#8dea97">Y</text>
        <text x="47" y="72" fill="#7a72f0">Z</text>
      </svg>

      <div class="viewbar">
        <button class="split" aria-label="Orbita"><svg width="14" height="14"><ellipse cx="7" cy="7.5" rx="6" ry="2.7" fill="none" stroke="#777" /><ellipse cx="7" cy="7" rx="2.7" ry="6" fill="none" stroke="#777" /><circle cx="7" cy="7" r="1" fill="#6a6ae0" /></svg><i class="caret"></i></button>
        <button aria-label="Patrz na"><svg width="14" height="14"><path d="M1.5 6H12.5V12H1.5Z" fill="#c9ccd0" stroke="#888" /><path d="M2 5L5 3H12V5" fill="none" stroke="#777" /><path d="M4 12V8.500H10V12M6 9V12M8 9V12" fill="none" stroke="#777" /></svg></button>
        <button aria-label="Przesuń widok"><svg width="14" height="14"><path d="M4 13C3 11 1 9 1 7.5L2 7L4 9V3H5.5V6.5L6 1.5H7.5V6.5L8.5 2H10V7L11 4H12.5C12 7 12 10 10.5 13Z" fill="#fff" stroke="#777" stroke-width="0.9" /></svg></button>
        <button aria-label="Powiększ"><svg width="14" height="14"><circle cx="6" cy="6" r="4" fill="#eef3f6" stroke="#888" /><path d="M8.5 8.5L12.5 12.5" stroke="#444" stroke-width="2" /><path d="M11.500 0.500V4M10 2H13M10.500 6H13" stroke="#777" /></svg></button>
        <button class="split" aria-label="Dopasuj"><svg width="14" height="14"><circle cx="6" cy="6" r="4.5" fill="#e8eef2" stroke="#888" /><rect x="4" y="4.5" width="4" height="3" fill="#aaa" /><path d="M9 9L12.5 12.5" stroke="#555" stroke-width="2" /></svg><i class="caret"></i></button>
        <button class="split" aria-label="Ekran"><svg width="14" height="14"><rect x="1" y="1.5" width="12" height="8.5" fill="#6aa9dc" stroke="#999" /><path d="M4 12.5H10M7 10V12" stroke="#888" stroke-width="1.5" /></svg><i class="caret"></i></button>
        <button class="split" aria-label="Siatka i przyciąganie"><svg width="14" height="14"><rect x="1.5" y="1.5" width="11" height="11" fill="#a6a9ad" stroke="#aaa" /><path d="M2 2H12V5H2Z" fill="#c9ccd0" /><path d="M2 5H12V8.500H2Z" fill="#868a90" /></svg><i class="caret"></i></button>
        <button class="split" aria-label="Rzutnie"><svg width="14" height="14"><rect x="1.5" y="2" width="11" height="10" fill="#7eb2dc" stroke="#7790a5" /><path d="M7 2V12M1.5 7H12.5" stroke="#4b7ca5" /></svg><i class="caret"></i></button>
      </div>
    </main>

    <footer>
      <div class="player">
        <button aria-label="Początek"><svg width="10" height="10"><path d="M1 0.5H2.5V9.5H1ZM9.5 0.5V9.5L3 5Z" fill="#444" /></svg></button>
        <button aria-label="Krok wstecz"><svg width="10" height="10"><path d="M6.5 0.5V9.5L0.5 5ZM7.5 3H9V7H7.5Z" fill="#444" /></svg></button>
        <button aria-label="Odtwórz"><svg width="10" height="12"><path d="M1 0.5L9.5 6L1 11.5Z" fill="#444" /></svg></button>
        <button aria-label="Krok naprzód"><svg width="10" height="10"><path d="M3.5 0.5V9.5L9.5 5ZM1 3H2.5V7H1Z" fill="#444" /></svg></button>
        <button aria-label="Koniec"><svg width="10" height="10"><path d="M7.5 0.5H9V9.5H7.5ZM0.5 0.5V9.5L7 5Z" fill="#444" /></svg></button>
      </div>
      <ul class="timeline" id="timeline"></ul>
      <button class="settings" aria-label="Ustawienia"><svg width="12" height="12"><use href="#gear" /></svg></button>
    </footer>

    <script>
      // Features of the timeline, in order
      const features = [
        "f-import", "f-remove", "sketch", "f-extrude", "f-combine", "f-group",
        "sketch", "f-extrude", "f-extrude", "f-shell", "f-fillet", "f-hole",
        "f-plane", "sketch", "sketch", "f-sweep", "f-pipe", "f-pipe",
        "f-chamfer", "f-chamfer", "f-pattern", "f-mirror", "sketch", "sketch",
        "f-pipe", "f-pipe", "f-chamfer", "f-chamfer", "f-split", "f-chamfer",
        "f-chamfer",
      ];
      const markerAfter = 2; // Features past the marker are rolled back

      document.getElementById("timeline").innerHTML = features
        .map((name, i) => {
          const state = i > markerAfter ? "rolled-back" : "";
          const marker =
            i === markerAfter
              ? '<svg class="marker" width="10" height="25"><path d="M0.5 1H9.5V5L6 8V24H4V8L0.5 5Z" fill="#555" /></svg>'
              : "";
          const group =
            name === "f-group"
              ? '<button class="expand" aria-label="Rozwiń grupę"><svg width="7" height="7"><path d="M3.5 1V6M1 3.5H6" stroke="#fff" stroke-width="1.5" /></svg></button>'
              : "";
          return `<li class="${state}"><svg width="13" height="13"><use href="#${name}" /></svg>${marker}${group}</li>`;
        })
        .join("");

      // Sketch points: x, y, kind
      const points = [
        [832, 345, "pt"], [835, 345, "pt"], [900, 329, "pt"], [901, 328, "pt"],
        [1001, 354, "pt-violet"], [1034, 363, "pt-violet"],
        [1139, 389, "pt"], [1140, 388, "pt"], [1170, 432, "pt"], [1173, 432, "pt"],
        [1107, 546, "pt"], [1110, 547, "pt"], [1108, 560, "pt"], [1111, 559, "pt"],
        [1128, 590, "pt"], [1131, 588, "pt"], [1128, 600, "pt"], [1132, 601, "pt"],
        [1051, 745, "pt"], [1055, 746, "pt"], [1000, 763, "pt"], [1002, 761, "pt"],
        [834, 712, "pt"], [835, 710, "pt"], [814, 673, "pt"], [817, 674, "pt"],
        [716, 501, "pt"], [719, 501, "pt-violet"], [724, 517, "pt"], [727, 516, "pt-violet"],
        [874, 558, "pt"], [878, 560, "pt"], [872, 562, "pt-violet"],
        [883, 569, "pt"], [883, 572, "pt"], [877, 571, "pt-violet"],
        [880, 357, "pt"], [1122, 419, "pt"], [851, 685, "pt"], [1016, 734, "pt"],
        [1110, 594, "pt"], [1132, 553, "pt-violet"],
      ];
      document.getElementById("points").innerHTML = points
        .map(([x, y, kind]) => `<use href="#${kind}" x="${x - 4}" y="${y - 4}" width="8" height="8" />`)
        .join("");
    </script>
  </body>
</html>
```
FILE: styles.css
```css
/* Basic styling */
* {
  box-sizing: border-box;
}

body {
  display: flex;
  flex-direction: column;
  min-height: 100vh;
  margin: 0;
  background-color: #fff;
  color: #333;
  font-family: "DejaVu Sans Condensed", "Noto Sans", sans-serif;
  font-size: 9px;
  line-height: 12px;
}

button {
  display: flex;
  align-items: center;
  justify-content: center;
  margin: 0;
  padding: 0;
  border: none;
  background: none;
  color: inherit;
  font: inherit;
}

svg {
  display: block;
  flex: none;
  overflow: visible;
}

ul {
  margin: 0;
  padding: 0;
  list-style: none;
}

.sprite {
  position: absolute;
  width: 0;
  height: 0;
}

.caret {
  width: 5px;
  height: 4px;
  margin-left: 3px;
  background-color: currentColor;
  clip-path: polygon(0 0, 100% 0, 50% 100%);
}

/* Title bar */
.titlebar {
  display: flex;
  align-items: stretch;
  height: 24px;
  padding-top: 3px;
  background-color: #c9c9c9;
}

.quick {
  display: flex;
  align-items: center;
  gap: 11px;
  margin-top: -3px;
  padding: 0 10px 0 5px;
  color: #666;
}

.history {
  display: flex;
  gap: 7px;
}

.doc-tab {
  display: flex;
  flex: 1;
  align-items: center;
  gap: 3px;
  padding: 1px 4px 0;
  border-radius: 3px 3px 0 0;
  background-color: #f1f1f1;
  font-family: "Noto Sans", sans-serif;
}

.doc-tab > svg {
  margin-left: auto;
}

.close {
  margin-left: auto;
}

.new-tab {
  width: 21px;
  margin-left: 3px;
  border-radius: 3px 3px 0 0;
  background-color: #b7b7b7;
}

.account {
  display: flex;
  align-items: center;
  gap: 12px;
  margin-top: -3px;
  padding: 0 10px 0 9px;
}

.avatar {
  margin-left: 2px;
  border-radius: 50%;
  background-color: #fff;
}

/* Ribbon */
.ribbon {
  display: flex;
  padding-bottom: 1px;
  border-bottom: 1px solid #dcdee2;
  background-color: #f1f1f1;
}

.workspace {
  width: 83px;
  margin: 8px 3px 6px 8px;
  border: 1px solid #d3d8da;
  border-radius: 3px;
  font-weight: bold;
}

.workspace .caret {
  margin-left: 4px;
}

.tabs {
  display: flex;
  gap: 33px;
  height: 17px;
  padding-left: 19px;
}

.tabs a {
  position: relative;
  padding-top: 3px;
  color: #333;
  text-decoration: none;
}

.tabs .active {
  color: #1b8ad6;
}

.tabs .active::after {
  content: "";
  position: absolute;
  right: -9px;
  bottom: 0;
  left: -9px;
  height: 2px;
  background-color: #1b8ad6;
}

.groups {
  display: flex;
  padding-top: 3px;
}

.group {
  display: flex;
  flex-direction: column;
  align-items: center;
  gap: 4px;
  border-right: 1px solid #d6d6d6;
}

.group:last-child {
  border-right: none;
}

.tools {
  display: flex;
  height: 24px;
  padding: 0 4px 0 5px;
}

.tools button {
  width: 32px;
}

.tools .selected {
  width: 28px;
  height: 28px;
  margin: -2px 0;
  background-color: #0f8fe0;
}

.tools .fx {
  color: #555;
  font: italic 28px/24px "Liberation Serif", serif;
}

.disabled {
  opacity: 0.25;
}

.group-label {
  padding: 0 9px;
}

/* Model space */
main {
  position: relative;
  flex: 1;
}

.model {
  position: absolute;
  width: 100%;
  height: 100%;
}

.profile {
  fill: #ebf6fb;
}

.hidden-holes {
  fill: none;
  stroke: #e8f4f6;
}

.edge {
  fill: none;
  stroke: #bcaaf0;
  stroke-width: 5;
}

.edge-core {
  fill: none;
  stroke: #e6e2fa;
  stroke-width: 3;
}

.gap-edge {
  stroke: #fff;
  stroke-width: 6;
}

.new-edge {
  stroke: #111;
  stroke-width: 1;
}

.hollow {
  fill: #fff;
  stroke: #b186e6;
  stroke-width: 1;
}

/* Browser panel */
.browser {
  position: relative;
  width: 288px;
  margin: 5px 0 0 3px;
}

.browser-head {
  display: flex;
  align-items: center;
  gap: 6px;
  height: 18px;
  padding: 0 7px 0 4px;
  border: 1px solid #d8d8d8;
  background-color: #f3f3f3;
  color: #555;
}

.browser-head span {
  flex: 1;
}

.tree {
  padding: 3px 0 0 13px;
}

.tree ul {
  padding-left: 14px;
}

.tree ul ul {
  padding-left: 27px;
}

.row {
  display: flex;
  align-items: center;
  height: 18px;
}

.toggle {
  width: 7px;
  height: 7px;
  margin-right: 7px;
  background-color: #999;
  clip-path: polygon(15% 0, 85% 50%, 15% 100%, 15% 80%, 60% 50%, 15% 20%);
}

.toggle.open {
  background-color: #333;
  clip-path: polygon(80% 0, 80% 90%, 0 90%);
}

.chip {
  display: flex;
  align-items: center;
  gap: 7px;
  height: 15px;
  padding: 0 9px 0 2px;
  background-color: #f1f1f1;
}

.chip span:last-child {
  padding-left: 2px;
}

.chip.narrow span {
  padding-left: 0;
}

.root {
  display: flex;
  align-items: center;
  gap: 10px;
  height: 12px;
  margin-right: -4px;
  padding: 0 9px 0 2px;
  background-color: #8f8f8f;
  color: #fff;
  font-size: 8px;
  font-weight: bold;
}

.chip input {
  width: 10px;
  height: 10px;
  margin: 0;
  border: 1px solid #888;
  border-radius: 50%;
  background: radial-gradient(circle, #333 2px, #e4e7ee 3px);
  appearance: none;
}

/* View cube */
.cube {
  position: absolute;
  top: 18px;
  right: 12px;
  font-family: "Liberation Sans", sans-serif;
  font-size: 10px;
}

.cube .face {
  fill: #8c8c8c;
  font-size: 9px;
  font-weight: bold;
}

/* Navigation bar over the model */
.viewbar {
  position: absolute;
  bottom: 5px;
  left: 50%;
  display: flex;
  align-items: center;
  gap: 5px;
  height: 18px;
  padding: 0 1px;
  background-color: #f1f1f1;
  transform: translateX(-50%);
}

.viewbar .caret {
  width: 4px;
  margin-left: 2px;
  color: #222;
}

/* Timeline */
footer {
  display: flex;
  align-items: center;
  height: 37px;
  padding: 0 10px 0 7px;
  border-top: 2px solid #bdbdbd;
  background-color: #f1f1f1;
}

.player {
  display: flex;
  align-items: center;
  gap: 9px;
  margin-right: 13px;
}

.timeline {
  position: relative;
  display: flex;
}

.timeline::after {
  content: "";
  position: absolute;
  right: 9px;
  bottom: 4px;
  left: 9px;
  height: 1px;
  background-color: #aaa;
}

.timeline li {
  position: relative;
  display: flex;
  justify-content: center;
  width: 18px;
  height: 35px;
  padding-top: 11px;
}

.timeline li::after {
  content: "";
  position: absolute;
  bottom: 4px;
  left: 9px;
  width: 1px;
  height: 5px;
  background-color: #aaa;
}

.timeline .rolled-back > svg {
  opacity: 0.3;
}

.marker {
  position: absolute;
  z-index: 1;
  top: 6px;
  right: -5px;
}

.expand {
  position: absolute;
  z-index: 1;
  bottom: 1px;
  left: 5px;
  width: 7px;
  height: 7px;
  background-color: #666;
}

.settings {
  margin-left: auto;
}
```
